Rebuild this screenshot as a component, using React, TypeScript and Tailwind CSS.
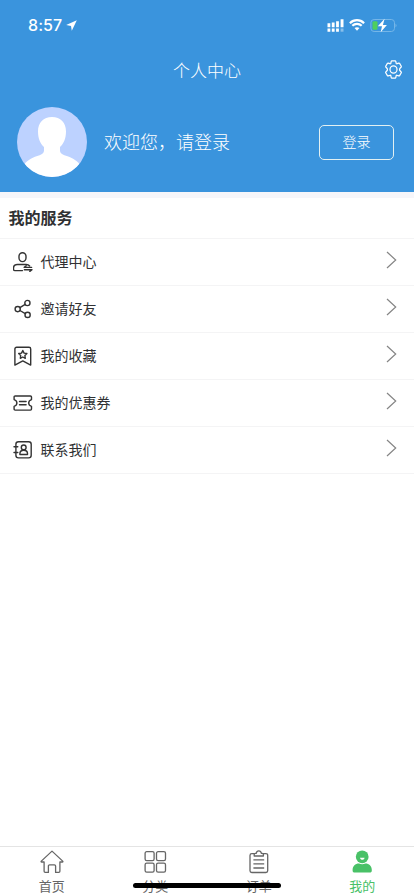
import type { ReactNode } from 'react'

const services: { label: string; icon: ReactNode }[] = [
  {
    label: '代理中心',
    icon: (
      <>
        <rect x="6" y=".8" width="7" height="8.8" rx="3.5" />
        <path d="M9.5 18.6H1.9c-.9 0-1.4-.5-1.4-1.4v-.9c0-2.5 1.5-3.8 3.9-3.8h8.7c1.6 0 2.8.5 3.5 1.5" />
        <path d="M18.6 15.4h-7.4l2-1.6M11.4 17.7h7.6l-2.2 1.7" />
      </>
    ),
  },
  {
    label: '邀请好友',
    icon: (
      <>
        <circle cx="4.7" cy="10.1" r="2.6" />
        <circle cx="14.4" cy="4" r="2.6" />
        <circle cx="14.6" cy="15.9" r="2.6" />
        <path d="M6.9 8.7l5.3-3.3M6.9 11.5l5.4 3.1" />
      </>
    ),
  },
  {
    label: '我的收藏',
    icon: (
      <>
        <path d="M3.6 1.2H16c1 0 1.7.7 1.7 1.7v16.2L9.8 14.9l-7.9 4.2V2.9c0-1 .7-1.7 1.7-1.7z" />
        <path d="M9.8 4.5l1.3 2.6 2.8.4-2 2 .4 2.8-2.5-1.3-2.5 1.3.4-2.8-2-2 2.8-.4z" />
      </>
    ),
  },
  {
    label: '我的优惠券',
    icon: (
      <>
        <path d="M2.2 3h15.2c.7 0 1.1.4 1.1 1.1v2.5c-1.9.7-2.8 1.9-2.8 3.4s.9 2.7 2.8 3.4v2.6c0 .7-.4 1.1-1.1 1.1H2.2c-.7 0-1.1-.4-1.1-1.1v-2.6c1.9-.7 2.8-1.9 2.8-3.4s-.9-2.7-2.8-3.4V4.1C1.1 3.4 1.5 3 2.2 3z" />
        <path d="M6.5 8.5h6.6M6.5 11.8h6.6" />
      </>
    ),
  },
  {
    label: '联系我们',
    icon: (
      <>
        <rect x="2.9" y="1.7" width="15.3" height="16.2" rx="2.6" />
        <path d="M1 6.7h3.8M1 12.5h3.8" />
        <circle cx="10.7" cy="7.4" r="2.4" />
        <path d="M6.9 14.5v-.9c0-2.1 1.4-3.4 3.8-3.4s3.8 1.3 3.8 3.4v.9z" />
      </>
    ),
  },
]

const tabs: { label: string; icon: ReactNode; active?: boolean }[] = [
  {
    label: '首页',
    icon: (
      <path d="M12 1.1L1.3 11.1c-.4.4-.2.9.3.9h2.5v9.3c0 .7.4 1.1 1.1 1.1h3.2v-6.3c0-.8.4-1.2 1.2-1.2h4.8c.8 0 1.2.4 1.2 1.2v6.3h3.2c.7 0 1.1-.4 1.1-1.1V12h2.5c.5 0 .7-.5.3-.9z" />
    ),
  },
  {
    label: '分类',
    icon: (
      <>
        <rect x="2.1" y="1.7" width="9" height="9" rx="1.6" />
        <rect x="13.5" y="1.7" width="9" height="9" rx="1.6" />
        <rect x="2.1" y="13.1" width="9" height="9" rx="1.6" />
        <rect x="13.5" y="13.1" width="9" height="9" rx="1.6" />
      </>
    ),
  },
  {
    label: '订单',
    icon: (
      <>
        <path d="M7.6 3.6H4.8C3.6 3.6 3 4.2 3 5.4v15.3c0 1.2.6 1.8 1.8 1.8h14.1c1.2 0 1.8-.6 1.8-1.8V5.4c0-1.2-.6-1.8-1.8-1.8H16" />
        <path d="M7.2 6V4.6c0-.8.4-1.2 1.2-1.2h.8C9.5 1.7 10.4.9 11.8.9s2.3.8 2.6 2.5h.8c.8 0 1.2.4 1.2 1.2V6z" />
        <path d="M6.4 9.8h10.8M6.4 13.9h10.8M6.4 18h10.8" />
      </>
    ),
  },
  {
    label: '我的',
    active: true,
    icon: (
      <>
        <circle cx="12.2" cy="6.8" r="6.4" fill="#49c167" stroke="none" />
        <path
          d="M2.6 19.8c0-3.8 2.7-6.3 6.4-6.3 2.1.9 4.3.9 6.4 0 3.7 0 6.4 2.5 6.4 6.3v.6c0 1.4-.7 2.1-2.1 2.1h-15c-1.4 0-2.1-.7-2.1-2.1z"
          fill="#49c167"
          stroke="none"
        />
        <path d="M10 7.7h4.6c-.4 1.5-1.1 2.1-2.3 2.1S10.4 9.2 10 7.7z" fill="#fff" stroke="none" />
      </>
    ),
  },
]

function StatusBar() {
  return (
    <div className="flex h-[50px] items-center justify-between pl-7 pr-[17px]">
      <div className="flex items-center gap-1">
        <span className="font-['Inter','Liberation_Sans',sans-serif] text-[16px] font-medium leading-5 tracking-[0.1px]">
          8:57
        </span>
        <svg className="size-[11px]" viewBox="0 0 11 11" fill="currentColor">
          <path d="M10.8.3L.2 5.1l4.8.8.8 4.9z" />
        </svg>
      </div>
      <div className="flex items-center gap-[5px]">
        <svg className="h-[13px] w-[17px]" viewBox="0 0 17 13" fill="currentColor">
          <path d="M.5 4.2h2.8v4H.5zM4.8 3.6h2.8v4.6H4.8zM9.1 2.3h2.8v5.9H9.1zM13.6.2h2.9v8h-2.9zM.5 9.5h2.8v3.2H.5zM4.8 9.5h2.8v3.2H4.8zM9.1 9.5h2.8v3.2H9.1z" />
          <path d="M13.6 9.5h2.9v3.2h-2.9z" opacity=".4" />
        </svg>
        <svg className="h-[12px] w-[16px]" viewBox="0 0 16 12" fill="none" stroke="currentColor">
          <path d="M.9 4.2c4.1-4 10.1-4 14.2 0M3.3 6.8c2.7-2.6 6.7-2.6 9.4 0" strokeWidth="2.2" />
          <path d="M8 11.8L5.5 9.1c1.4-1.3 3.6-1.3 5 0z" fill="currentColor" stroke="none" />
        </svg>
        <svg className="h-[15px] w-[27px]" viewBox="0 0 27 15">
          <rect x=".9" y="1.5" width="23.6" height="12" rx="3.2" fill="none" stroke="#75b6e8" />
          <path d="M25.5 5.8c1.4.8 1.4 2.6 0 3.4z" fill="#75b6e8" />
          <rect x="2.5" y="3.2" width="5" height="8.6" rx="1.2" fill="#4fcf5d" />
          <path d="M14.6.8L7.8 8.3H12l-1.3 6 6.2-7.4h-4z" fill="#fff" />
        </svg>
      </div>
    </div>
  )
}

function Avatar() {
  return (
    <svg className="size-[70px] shrink-0 rounded-full bg-[#bdd2ff]" viewBox="0 0 70 70">
      <path
        d="M35 10c8.6 0 14 5.6 14 14.4 0 7-2.4 12.3-6 15.7v3.5c0 2.4 1.4 3.6 4.4 4.6 6.5 2 11.6 4.4 15.6 9.3V72H7V57.5c4-4.9 9.1-7.3 15.6-9.3 3-1 4.4-2.2 4.4-4.6v-3.5c-3.6-3.4-6-8.7-6-15.7C21 15.6 26.4 10 35 10z"
        fill="#fff"
      />
    </svg>
  )
}

export default function App() {
  return (
    <div className="flex h-[896px] w-[414px] flex-col overflow-hidden bg-white font-['Noto_Sans_CJK_SC',sans-serif] text-[#303133]">
      <header className="h-[192px] shrink-0 bg-[#3a94dd] text-white">
        <StatusBar />
        <div className="grid h-10 grid-cols-3 items-center pr-[11px]">
          <h1 className="col-start-2 -mr-[11px] text-center text-[17px] font-light leading-6">
            个人中心
          </h1>
          <svg
            className="mb-0.5 size-[19px] justify-self-end"
            viewBox="0 0 20 20"
            fill="none"
            stroke="currentColor"
            strokeWidth="1.3"
            strokeLinejoin="round"
          >
            <path d="M8.2 1h3.6c.3 0 .5.2.6.5l.4 1.9c.1.4.6.7 1 .5l1.8-.6c.3-.1.6 0 .8.3l1.8 3c.2.3.1.6-.1.8l-1.4 1.5c-.4.4-.4 1.8 0 2.2l1.4 1.5c.2.2.3.5.1.8l-1.8 3c-.2.3-.5.4-.8.3l-1.8-.6c-.4-.2-.9.1-1 .5l-.4 1.9c-.1.3-.3.5-.6.5H8.200c-.3 0-.5-.2-.6-.5l-.4-1.900c-.1-.4-.6-.7-1-.5l-1.800.6c-.3.1-.6 0-.8-.3l-1.800-3c-.2-.3-.1-.6.1-.8l1.400-1.500c.4-.4.4-1.800 0-2.200L1.900 7.400c-.2-.2-.3-.5-.1-.8l1.800-3c.2-.3.5-.4.8-.3l1.800.6c.4.2.9-.1 1-.5l.4-1.900c.1-.3.3-.5.6-.5z" />
            <circle cx="10" cy="10" r="3.7" />
          </svg>
        </div>
        <div className="flex items-center pl-[17px] pr-5 pt-[17px]">
          <Avatar />
          <p className="-mt-0.5 ml-[17px] flex-1 text-[18px] font-light leading-6">欢迎您，请登录</p>
          <button className="h-[35px] w-[75px] rounded-[5px] border border-[#e2f0f2] pb-0.5 text-[14px] font-light leading-5">
            登录
          </button>
        </div>
      </header>

      <main className="flex-1 border-t-[6px] border-[#f6f6fa]">
        <h2 className="flex h-[41px] items-center border-b border-[#f4f4f5] px-[8.5px] pb-0.5 text-[16px] font-bold">
          我的服务
        </h2>
        <ul>
          {services.map((item) => (
            <li
              key={item.label}
              className="flex h-[47px] items-center border-b border-[#f4f4f5] pl-[13px] pr-[17px]"
            >
              <svg
                className="size-5 shrink-0"
                viewBox="0 0 20 20"
                fill="none"
                stroke="#333"
                strokeWidth="1.4"
                strokeLinejoin="round"
                strokeLinecap="round"
              >
                {item.icon}
              </svg>
              <span className="-mt-0.5 ml-[7.5px] flex-1 text-[14px] leading-5">{item.label}</span>
              <svg
                className="mb-[5px] h-[18px] w-[11px]"
                viewBox="0 0 11 18"
                fill="none"
                stroke="#858585"
                strokeWidth="1.2"
              >
                <path d="M1 1l8.7 8L1 17" />
              </svg>
            </li>
          ))}
        </ul>
      </main>

      <nav className="relative grid h-[50px] shrink-0 grid-cols-4 border-t border-[#e4e4e4]">
        {tabs.map((tab) => (
          <a
            key={tab.label}
            className={
              tab.active
                ? 'flex flex-col items-center pt-[3px] text-[#49c167]'
                : 'flex flex-col items-center pt-[3px] text-[#666]'
            }
          >
            <svg
              className="size-6"
              viewBox="0 0 24 24"
              fill="none"
              stroke="currentColor"
              strokeWidth="1.3"
              strokeLinejoin="round"
            >
              {tab.icon}
            </svg>
            <span className="mt-[3px] text-[13px] leading-[18px]">{tab.label}</span>
          </a>
        ))}
        {/* home indicator */}
        <div className="absolute left-[133px] top-[36px] h-[5px] w-[148px] rounded-full bg-black" />
      </nav>
    </div>
  )
}
